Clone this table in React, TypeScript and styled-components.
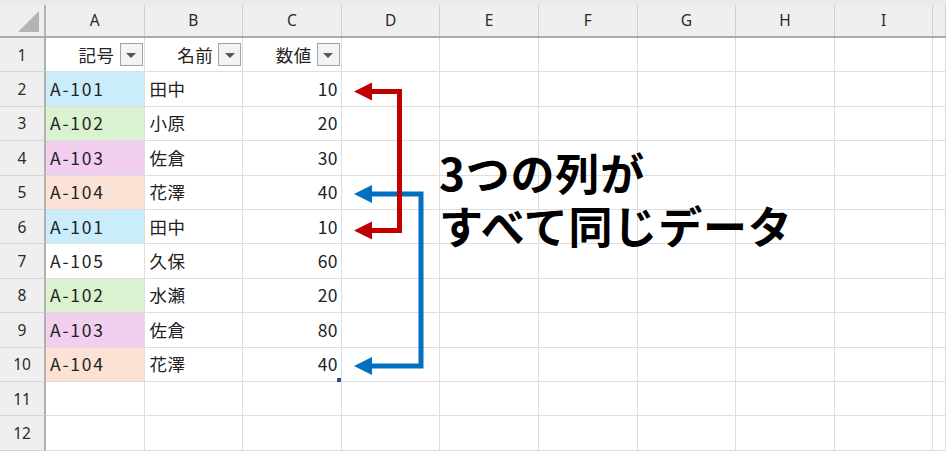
import React from "react";
import styled, { createGlobalStyle } from "styled-components";

const GlobalStyle = createGlobalStyle`
  html, body { margin: 0; padding: 0; background: #ffffff; overflow: hidden; }
  * { box-sizing: border-box; }
`;

const COLS = ["A", "B", "C", "D", "E", "F", "G", "H", "I", ""];
const TEMPLATE = "46px repeat(9, 98.6px) 1fr";
const ROW_H = 34.4;

const Page = styled.div`
  position: relative;
  width: 946px;
  height: 452px;
  overflow: hidden;
  font-family: "Noto Sans CJK JP", "Noto Sans", sans-serif;
  color: #222;
`;

const TopBand = styled.div`
  height: 5px;
  background: #e7e9ec;
`;

const HeaderRow = styled.div`
  display: grid;
  grid-template-columns: ${TEMPLATE};
  height: 33px;
  background: #efefef;
  border-bottom: 2px solid #ababab;
`;

const Corner = styled.div`
  position: relative;
  border-right: 2px solid #b5b5b5;
  &::after {
    content: "";
    position: absolute;
    right: 5px;
    bottom: 4px;
    width: 0;
    height: 0;
    border-left: 21px solid transparent;
    border-bottom: 21px solid #b4b4b4;
  }
`;

const ColHead = styled.div`
  display: flex;
  align-items: center;
  justify-content: center;
  border-right: 1px solid #cfcfcf;
  font-family: "Noto Sans", "Liberation Sans", sans-serif;
  font-size: 15.5px;
  color: #2a2a2a;
  padding-bottom: 2px;
`;

const Row = styled.div`
  display: grid;
  grid-template-columns: ${TEMPLATE};
  height: ${ROW_H}px;
`;

const RowHead = styled.div`
  display: flex;
  align-items: center;
  justify-content: center;
  background: #efefef;
  border-right: 2px solid #b0b0b0;
  border-bottom: 1px solid #d3d3d3;
  font-family: "Noto Sans", "Liberation Sans", sans-serif;
  font-size: 15.5px;
  color: #2a2a2a;
`;

const Cell = styled.div<{ $bg?: string; $align?: "left" | "right" }>`
  position: relative;
  display: flex;
  align-items: center;
  justify-content: ${(p) => (p.$align === "right" ? "flex-end" : "flex-start")};
  padding: 0 3px 1px 4px;
  background: ${(p) => p.$bg || "#ffffff"};
  border-right: 1px solid #dedede;
  border-bottom: 1px solid #dedede;
  font-size: 17.5px;
  white-space: nowrap;
`;

const Code = styled.span`
  letter-spacing: 1.8px;
`;

const Name = styled.span`
  padding-left: 1px;
  letter-spacing: 0.5px;
`;

const Num = styled.span`
  letter-spacing: 0.3px;
`;

const HeadCell = styled(Cell)`
  justify-content: flex-end;
  gap: 5px;
  padding-right: 1px;
`;

const FilterButton = styled.div`
  width: 23px;
  height: 23px;
  border: 1px solid #a3a3a3;
  background: #f3f3f3;
  display: flex;
  align-items: center;
  justify-content: center;
  &::after {
    content: "";
    width: 0;
    height: 0;
    border-left: 5px solid transparent;
    border-right: 5px solid transparent;
    border-top: 5px solid #555;
    margin-top: 2px;
  }
`;

const FillHandle = styled.div`
  position: absolute;
  right: 0;
  bottom: -1px;
  width: 4px;
  height: 4px;
  background: #3148a0;
`;

const Overlay = styled.svg`
  position: absolute;
  left: 0;
  top: 0;
  pointer-events: none;
`;

const Callout = styled.div`
  position: absolute;
  left: 439px;
  top: 146px;
  display: flex;
  flex-direction: column;
  font-family: "Noto Sans CJK JP", sans-serif;
  font-weight: 700;
  font-size: 44px;
  letter-spacing: 0.8px;
  color: #000;
  white-space: nowrap;
`;

const CalloutLine = styled.div`
  height: 53px;
  line-height: 53px;
`;

const fills: Record<string, string> = {
  blue: "#caedfb",
  green: "#daf2d0",
  pink: "#f2ceef",
  peach: "#fbe2d5",
};

const data: { code: string; name: string; num: number; fill?: string }[] = [
  { code: "A-101", name: "田中", num: 10, fill: "blue" },
  { code: "A-102", name: "小原", num: 20, fill: "green" },
  { code: "A-103", name: "佐倉", num: 30, fill: "pink" },
  { code: "A-104", name: "花澤", num: 40, fill: "peach" },
  { code: "A-101", name: "田中", num: 10, fill: "blue" },
  { code: "A-105", name: "久保", num: 60 },
  { code: "A-102", name: "水瀬", num: 20, fill: "green" },
  { code: "A-103", name: "佐倉", num: 80, fill: "pink" },
  { code: "A-104", name: "花澤", num: 40, fill: "peach" },
];

const emptyCells = (n: number) =>
  Array.from({ length: n }, (_, i) => <Cell key={`e${i}`} />);

function Arrow({ color, y1, y2, x }: { color: string; y1: number; y2: number; x: number }) {
  return (
    <g>
      <path
        d={`M370 ${y1} H${x} V${y2} H370`}
        fill="none"
        stroke={color}
        strokeWidth={5}
        strokeLinejoin="miter"
      />
      <polygon points={`354,${y1} 372,${y1 - 9} 372,${y1 + 9}`} fill={color} />
      <polygon points={`354,${y2} 372,${y2 - 9} 372,${y2 + 9}`} fill={color} />
    </g>
  );
}

export default function App() {
  return (
    <Page>
      <GlobalStyle />
      <TopBand />
      <HeaderRow>
        <Corner />
        {COLS.map((c, i) => (
          <ColHead key={i}>{c}</ColHead>
        ))}
      </HeaderRow>
      <Row>
        <RowHead>1</RowHead>
        <HeadCell>
          <Name>記号</Name>
          <FilterButton />
        </HeadCell>
        <HeadCell>
          <Name>名前</Name>
          <FilterButton />
        </HeadCell>
        <HeadCell>
          <Name>数値</Name>
          <FilterButton />
        </HeadCell>
        {emptyCells(7)}
      </Row>
      {data.map((d, i) => (
        <Row key={i}>
          <RowHead>{i + 2}</RowHead>
          <Cell $bg={d.fill ? fills[d.fill] : undefined}>
            <Code>{d.code}</Code>
          </Cell>
          <Cell>
            <Name>{d.name}</Name>
          </Cell>
          <Cell $align="right">
            <Num>{d.num}</Num>
            {i === data.length - 1 && <FillHandle />}
          </Cell>
          {emptyCells(7)}
        </Row>
      ))}
      {[11, 12].map((n) => (
        <Row key={n}>
          <RowHead>{n}</RowHead>
          {emptyCells(10)}
        </Row>
      ))}
      <Overlay width={946} height={452} viewBox="0 0 946 452">
        <Arrow color="#0070c0" y1={194} y2={366} x={421} />
        <Arrow color="#c00000" y1={91.5} y2={230.5} x={399.5} />
      </Overlay>
      <Callout>
        <CalloutLine>3つの列が</CalloutLine>
        <CalloutLine>すべて同じデータ</CalloutLine>
      </Callout>
    </Page>
  );
}
